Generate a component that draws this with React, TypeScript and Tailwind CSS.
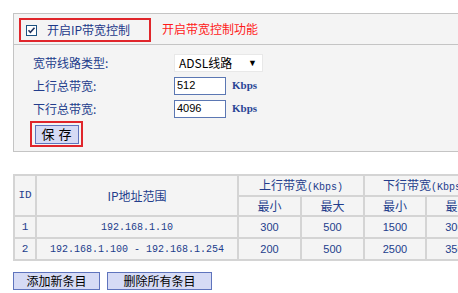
const cjk = "font-['SimSun','Noto_Sans_CJK_SC',sans-serif]";

function CheckIcon() {
  return (
    <svg width="11" height="11" viewBox="0 0 11 11" className="block">
      <rect x="0.5" y="0.5" width="10" height="10" fill="#ffffff" stroke="#1c5180" />
      <path d="M2.5 5.2 L4.4 7.4 L8.5 2.8" fill="none" stroke="#21345e" strokeWidth="1.6" />
    </svg>
  );
}

const rows = [
  { id: "1", range: "192.168.1.10", upMin: "300", upMax: "500", downMin: "1500", downMax: "3000" },
  { id: "2", range: "192.168.1.100 - 192.168.1.254", upMin: "200", upMax: "500", downMin: "2500", downMax: "3500" },
];

export default function App() {
  const cell = "border-2 border-[#d4d4d4] text-center p-0";
  return (
    <div className="w-[458px] h-[293px] overflow-hidden bg-white pt-[13px] pl-[13px] text-[#233d8c]">
      {/* Settings panel */}
      <div className="w-[460px] bg-[#f4f4f4] border-t border-l border-b border-[#c4c4c4]">
        <div className={`h-[31px] flex items-start border-b border-[#c4c4c4] text-[12px] ${cjk}`}>
          <div className="mt-[4px] ml-[5px] w-[132px] h-[24px] border-2 border-[#e0262b] flex items-center pl-[5px]">
            <CheckIcon />
            <span className="ml-[10px] text-[#1f3a8a] leading-none">开启IP带宽控制</span>
          </div>
          <span className="ml-[11px] mt-[9px] text-[#ff1a1a] leading-none">开启带宽控制功能</span>
        </div>

        <div className="pl-[19px] pt-[6px] pb-[4px] text-[12px]">
          <div className="h-[23px] flex items-center">
            <span className={`w-[141px] ${cjk}`}>宽带线路类型:</span>
            <div className="w-[89px] h-[18px] bg-white border border-[#e8e8e8] flex items-center justify-between pl-[4px] pr-[5px] text-black">
              <span className={`text-[12px] leading-none ${cjk}`}>ADSL线路</span>
              <span className="text-[9px] leading-none">▼</span>
            </div>
          </div>
          {[
            { label: "上行总带宽:", value: "512" },
            { label: "下行总带宽:", value: "4096" },
          ].map((r) => (
            <div key={r.label} className="h-[23px] flex items-center">
              <span className={`w-[141px] ${cjk}`}>{r.label}</span>
              <div className="w-[52px] h-[18px] bg-white border border-[#5b77b3] flex items-center pl-[2px] text-black font-['Liberation_Sans',sans-serif] text-[11px]">
                {r.value}
              </div>
              <span className="ml-[6px] font-['Liberation_Serif',serif] font-bold text-[11px] text-[#2a4596]">Kbps</span>
            </div>
          ))}
          <div className="mt-[1px] ml-[-3px] w-[53px] h-[26px] border-2 border-[#e0262b] flex items-center justify-center">
            <div className={`w-[44px] h-[19px] bg-[#d6dbf5] border border-[#5f74bd] flex items-center justify-center text-[13px] text-black tracking-[4px] pl-[4px] ${cjk}`}>
              保存
            </div>
          </div>
        </div>
      </div>

      {/* Rules table */}
      <div className="mt-[22px] w-[445px] overflow-hidden">
        <table className="border-collapse bg-[#f4f4f4] text-[12px] table-fixed w-[475px]">
          <colgroup>
            <col className="w-[22px]" />
            <col className="w-[202px]" />
            <col className="w-[63px]" />
            <col className="w-[63px]" />
            <col className="w-[62px]" />
            <col className="w-[63px]" />
          </colgroup>
          <thead>
            <tr className="h-[19px]">
              <th rowSpan={2} className={`${cell} font-normal font-['Liberation_Mono',monospace] text-[11px]`}>ID</th>
              <th rowSpan={2} className={`${cell} font-normal ${cjk}`}>IP地址范围</th>
              <th colSpan={2} className={`${cell} font-normal ${cjk}`}>
                上行带宽<span className="font-['Liberation_Mono',monospace] text-[10px]">(Kbps)</span>
              </th>
              <th colSpan={2} className={`${cell} font-normal text-left pl-[18px] whitespace-nowrap ${cjk}`}>
                下行带宽<span className="font-['Liberation_Mono',monospace] text-[10px]">(Kbps)</span>
              </th>
            </tr>
            <tr className="h-[20px]">
              <th className={`${cell} font-normal ${cjk}`}>最小</th>
              <th className={`${cell} font-normal ${cjk}`}>最大</th>
              <th className={`${cell} font-normal ${cjk}`}>最小</th>
              <th className={`${cell} font-normal ${cjk}`}>最大</th>
            </tr>
          </thead>
          <tbody>
            {rows.map((r) => (
              <tr key={r.id} className="h-[22px]">
                <td className={`${cell} font-['Liberation_Mono',monospace] text-[11px]`}>{r.id}</td>
                <td className={`${cell} font-['Liberation_Mono',monospace] text-[10px] whitespace-nowrap`}>{r.range}</td>
                <td className={`${cell} font-['Liberation_Sans',sans-serif] text-[11px]`}>{r.upMin}</td>
                <td className={`${cell} font-['Liberation_Sans',sans-serif] text-[11px]`}>{r.upMax}</td>
                <td className={`${cell} font-['Liberation_Sans',sans-serif] text-[11px]`}>{r.downMin}</td>
                <td className={`${cell} font-['Liberation_Sans',sans-serif] text-[11px]`}>{r.downMax}</td>
              </tr>
            ))}
          </tbody>
        </table>
      </div>

      {/* Actions */}
      <div className={`mt-[11px] flex gap-[7px] text-[12px] text-black ${cjk}`}>
        <button className="w-[87px] h-[18px] bg-[#d6dbf5] border border-[#5f74bd] leading-none">添加新条目</button>
        <button className="w-[105px] h-[18px] bg-[#d6dbf5] border border-[#5f74bd] leading-none">删除所有条目</button>
      </div>
    </div>
  );
}
